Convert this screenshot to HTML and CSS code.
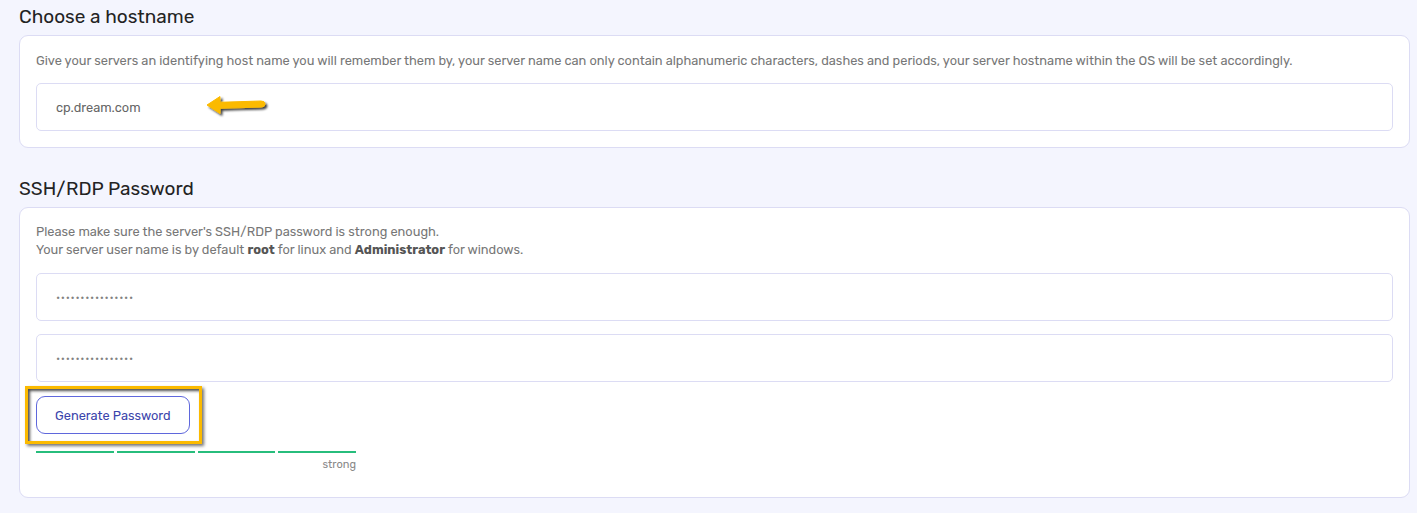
FILE: index.html
```html
<!DOCTYPE html>
<html>
<head>
<meta charset="utf-8">
<link rel="stylesheet" href="styles.css">
</head>
<body>
<section class="section">
  <h2 class="title title-first">Choose a hostname</h2>
  <div class="card">
    <p class="desc">Give your servers an identifying host name you will remember them by, your server name can only contain alphanumeric characters, dashes and periods, your server hostname within the OS will be set accordingly.</p>
    <div class="field">
      <span class="value">cp.dream.com</span>
      <svg class="arrow" width="70" height="26" viewBox="0 0 70 26">
        <defs>
          <filter id="sh" x="-20%" y="-40%" width="150%" height="200%">
            <feGaussianBlur in="SourceAlpha" stdDeviation="1.2"/>
            <feOffset dx="1.5" dy="2" result="b"/>
            <feFlood flood-color="#000" flood-opacity="0.75"/>
            <feComposite in2="b" operator="in"/>
            <feMerge><feMergeNode/><feMergeNode in="SourceGraphic"/></feMerge>
          </filter>
        </defs>
        <g filter="url(#sh)">
          <path d="M2 12 L15 3.5 L15 9.3 L56 8 Q60 8 60 11 Q60 14 56 14 L15 15.3 L15 20.5 Z" fill="#fbba00" stroke="#fbba00" stroke-width="1" stroke-linejoin="round"/>
        </g>
      </svg>
    </div>
  </div>
</section>
<section class="section">
  <h2 class="title title-second">SSH/RDP Password</h2>
  <div class="card card-pw">
    <p class="desc desc-pw">Please make sure the server's SSH/RDP password is strong enough.<br>Your server user name is by default <b>root</b> for linux and <b>Administrator</b> for windows.</p>
    <div class="field"><span class="dots">••••••••••••••••</span></div>
    <div class="field field-2"><span class="dots">••••••••••••••••</span></div>
    <div class="btn-wrap">
      <button class="btn">Generate Password</button>
      <span class="highlight"></span>
    </div>
    <div class="meter">
      <div class="bars"><span></span><span></span><span></span><span></span></div>
      <div class="meter-label">strong</div>
    </div>
  </div>
</section>
</body>
</html>
```
FILE: styles.css
```css
* { box-sizing: border-box; }
html, body { margin: 0; }
body {
  background: #f4f5fe;
  padding: 0 7px 0 19px;
  font-family: "Rubik", Inter, "Noto Sans", sans-serif;
  color: #222;
  height: 513px;
  overflow: hidden;
}
.title {
  margin: 0;
  font-size: 19px;
  font-weight: 400;
  line-height: 23px;
  color: #232323;
}
.title-first { padding-top: 5px; margin-bottom: 7px; }
.title-second { margin-top: 29px; margin-bottom: 7px; }
.card {
  background: #fff;
  border: 1px solid #dcdcf4;
  border-radius: 9px;
  padding: 16px 16px 16px 16px;
}
.desc {
  margin: 0;
  font-size: 12.8px;
  line-height: 18px;
  color: #777;
}
.desc b { color: #555; font-weight: 700; }
.field {
  position: relative;
  margin-top: 13px;
  height: 48px;
  border: 1px solid #dcdcf4;
  border-radius: 5px;
  display: flex;
  align-items: center;
  padding-left: 19px;
}
.value { font-size: 12.8px; color: #666; }
.arrow { position: absolute; left: 168px; top: 9px; }
.card-pw { padding-top: 15px; padding-bottom: 25px; }
.desc-pw + .field { margin-top: 14px; }
.dots {
  font-size: 11px;
  letter-spacing: 0.66px;
  color: #808080;
  padding-top: 1px;
}
.btn-wrap { position: relative; margin-top: 14px; display: flex; }
.btn {
  font-family: inherit;
  height: 38px;
  padding: 0 18px;
  background: #fff;
  border: 1px solid #5f67dc;
  border-radius: 9px;
  color: #3b44ab;
  font-size: 12.8px;
  cursor: pointer;
}
.highlight {
  position: absolute;
  left: -11px;
  top: -10px;
  width: 177px;
  height: 58px;
  border: 3px solid #fbba00;
  box-shadow: 2px 2px 3px rgba(0,0,0,.55), inset 2px 2px 3px rgba(0,0,0,.7);
  pointer-events: none;
}
.meter { width: 320px; margin-top: 17px; }
.bars { display: flex; gap: 3px; }
.bars span { flex: 1; height: 2px; background: #27bd7c; }
.meter-label {
  text-align: right;
  font-size: 11px;
  line-height: 14px;
  margin-top: 5px;
  color: #888;
}
```
